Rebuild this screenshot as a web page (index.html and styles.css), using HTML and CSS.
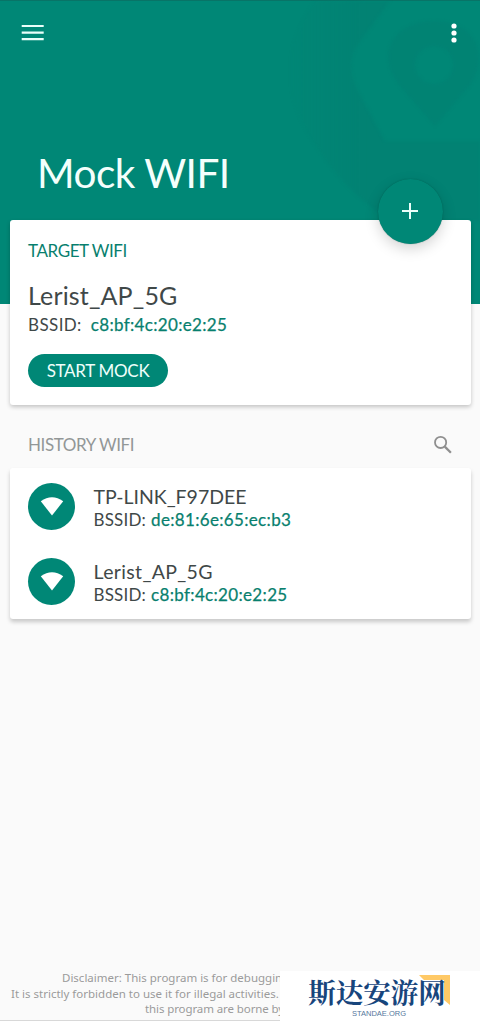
FILE: index.html
```html
<!DOCTYPE html>
<html lang="en">
<head>
<meta charset="utf-8">
<title>Mock WIFI</title>
<link rel="stylesheet" href="styles.css">
</head>
<body>
<div class="app">
  <header class="header">
    <svg class="pattern" width="200" height="304" viewBox="0 0 200 304" aria-hidden="true">
      <defs><linearGradient id="fade" x1="0" y1="0" x2="1" y2="0"><stop offset="0" stop-color="#037c70" stop-opacity="0"/><stop offset=".4" stop-color="#037c70" stop-opacity=".45"/></linearGradient></defs>
      <path fill="url(#fade)" fill-rule="evenodd" d="M35 0C-5 55 5 100 36 145C55 175 80 200 110 220H200V140H105L82 97Q62 64 79 42L110 0Z"/>
      <path fill="#037c70" fill-opacity=".35" fill-rule="evenodd" d="M155 125L120 85C94 53 114 20 154 20C196 20 210 55 190 84ZM154 45a19 19 0 1 0 .1 0Z"/>
    </svg>
    <div class="toolbar">
      <svg width="24" height="20" viewBox="0 0 24 20"><path d="M.7 4H22.7M.7 10.7H22.7M.7 17.2H22.7" stroke="#e9fffa" stroke-width="2.2"/></svg>
      <svg width="8" height="22" viewBox="0 0 8 22" fill="#fff"><circle cx="4" cy="4" r="2.6"/><circle cx="4" cy="11" r="2.6"/><circle cx="4" cy="18" r="2.6"/></svg>
    </div>
    <h1 class="title">Mock WIFI</h1>
  </header>
  <main class="content">
    <section class="card target">
      <button class="fab" aria-label="Add"><svg width="18" height="18" viewBox="0 0 18 18"><path d="M9 1V17M1 9H17" stroke="#e9fffa" stroke-width="2"/></svg></button>
      <h2 class="label">TARGET WIFI</h2>
      <div class="ssid">Lerist_AP_5G</div>
      <div class="bssid"><span class="key">BSSID:</span><span class="mac">c8:bf:4c:20:e2:25</span></div>
      <button class="start">START MOCK</button>
    </section>
    <div class="history-head">
      <h2 class="history-label">HISTORY WIFI</h2>
      <svg width="20" height="20" viewBox="0 0 20 20" fill="none" stroke="#8f8f8f" stroke-width="1.8"><circle cx="7.6" cy="7.4" r="5.6"/><path d="M11.8 11.6L17.9 17.7" stroke-width="2.3"/></svg>
    </div>
    <section class="card history">
      <div class="row">
        <span class="avatar"><svg width="24" height="20" viewBox="0 0 24 20"><path fill="#fff" d="M.8 4.3Q12-3.7 23.2 4.3L12 18.5Z"/></svg></span>
        <div><div class="name first">TP-LINK_F97DEE</div><div class="bssid small"><span class="key">BSSID:</span><span class="mac">de:81:6e:65:ec:b3</span></div></div>
      </div>
      <div class="row">
        <span class="avatar"><svg width="24" height="20" viewBox="0 0 24 20"><path fill="#fff" d="M.8 4.3Q12-3.7 23.2 4.3L12 18.5Z"/></svg></span>
        <div><div class="name">Lerist_AP_5G</div><div class="bssid small"><span class="key">BSSID:</span><span class="mac">c8:bf:4c:20:e2:25</span></div></div>
      </div>
    </section>
  </main>
  <footer class="footer">
    <div class="disclaimer">
      <p class="line one">Disclaimer: This program is for debuggin</p>
      <p class="line two">It is strictly forbidden to use it for illegal activities.</p>
      <p class="line three">this program are borne by</p>
    </div>
    <div class="brand">
      <svg class="corner" width="31" height="30" viewBox="0 0 31 30"><path fill="#ffc966" d="M0 0H31V30L25 25V5H5Z"/></svg>
      <div class="brand-name" lang="zh-CN">斯达安游网</div>
      <div class="brand-url">STANDAE.ORG</div>
    </div>
  </footer>
</div>
</body>
</html>
```
FILE: styles.css
```css
* { box-sizing: border-box; margin: 0; padding: 0; }
body { font-family: Lato, "Noto Sans", sans-serif; background: #fafafa; color: #3f4848; }
h1, h2 { font-weight: 400; }
button { border: 0; font-family: inherit; }
svg { display: block; }
.app { height: 1021px; display: flex; flex-direction: column; overflow: hidden; }
.header { position: relative; flex: none; height: 304px; background: #008776; border-top: 1px solid #087467; }
.pattern { position: absolute; right: 0; top: 0; filter: blur(1.5px); }
.toolbar { position: relative; display: flex; justify-content: space-between; padding: 21px 22px 0 21px; height: 50px; }
.title { position: relative; color: #f4fffc; font-size: 40.5px; line-height: 48px; padding: 98px 0 0 37px; letter-spacing: -.5px; white-space: nowrap; }
.content { position: relative; margin-top: -84px; padding: 0 9.5px; flex: 1; }
.card { background: #fff; border-radius: 3px; box-shadow: 0 2px 4px rgba(0,0,0,.22); }
.target { position: relative; height: 185px; padding: 20px 18.5px 0; }
.fab { position: absolute; right: 28px; top: -41.5px; width: 65px; height: 65px; border-radius: 50%; background: #008776; display: grid; place-items: center; box-shadow: 0 5px 14px rgba(0,0,0,.17), 0 0 1px rgba(0,70,60,.6); }
.label, .history-label { font-size: 17px; line-height: 22px; letter-spacing: -.42px; white-space: nowrap; }
.label { color: #087f6e; }
.ssid { margin-top: 18px; font-size: 25px; line-height: 30px; letter-spacing: .15px; white-space: nowrap; }
.bssid { display: flex; gap: 9px; font-size: 17px; line-height: 22px; margin-top: 4px; white-space: nowrap; }
.key { letter-spacing: .4px; }
.mac { color: #087f6e; letter-spacing: .33px; -webkit-text-stroke: .25px #087f6e; }
.start { display: block; width: 140px; height: 33px; margin-top: 18px; border-radius: 17px; background: #008776; color: #effffb; font-size: 17px; letter-spacing: -.3px; white-space: nowrap; }
.history-head { height: 63px; padding: 16px 18px 0 18.5px; display: flex; align-items: center; justify-content: space-between; }
.history-label { color: #929797; }
.history { height: 151px; padding: 1px 18.5px; box-shadow: 0 3px 4px rgba(0,0,0,.2); }
.row { height: 75px; display: flex; align-items: center; gap: 18.5px; }
.avatar { width: 47px; height: 47px; border-radius: 50%; background: #008776; display: grid; place-items: center; }
.name { font-size: 19.5px; line-height: 24px; letter-spacing: .35px; padding-top: 2px; white-space: nowrap; }
.first { letter-spacing: -.02px; }
.small { margin-top: 0; gap: 5px; }
.small .key { letter-spacing: .2px; }
.footer { flex: none; height: 50px; display: flex; border-bottom: 1px solid #d8d8d8; }
.disclaimer { width: 280px; overflow: hidden; font-family: "Noto Sans", sans-serif; font-size: 11.5px; line-height: 15.7px; letter-spacing: 0; color: #9b9b9b; white-space: nowrap; margin-top: -1px; }
.one { padding-left: 62px; }
.two { padding-left: 11px; }
.three { padding-left: 145px; letter-spacing: -.1px; }
.brand { position: relative; width: 200px; height: 50px; background: #fff; text-align: center; padding-top: 5px; }
.corner { position: absolute; left: 139px; top: 4px; }
.brand-name { position: relative; font-family: "Noto Serif CJK SC", "Noto Sans CJK SC", sans-serif; font-size: 27.5px; line-height: 30px; font-weight: 700; color: #17457c; padding-right: 6px; white-space: nowrap; }
.brand-url { font-family: "Liberation Sans", sans-serif; font-size: 7.5px; line-height: 15px; color: #55779c; letter-spacing: 0; padding-right: 2px; }
```
